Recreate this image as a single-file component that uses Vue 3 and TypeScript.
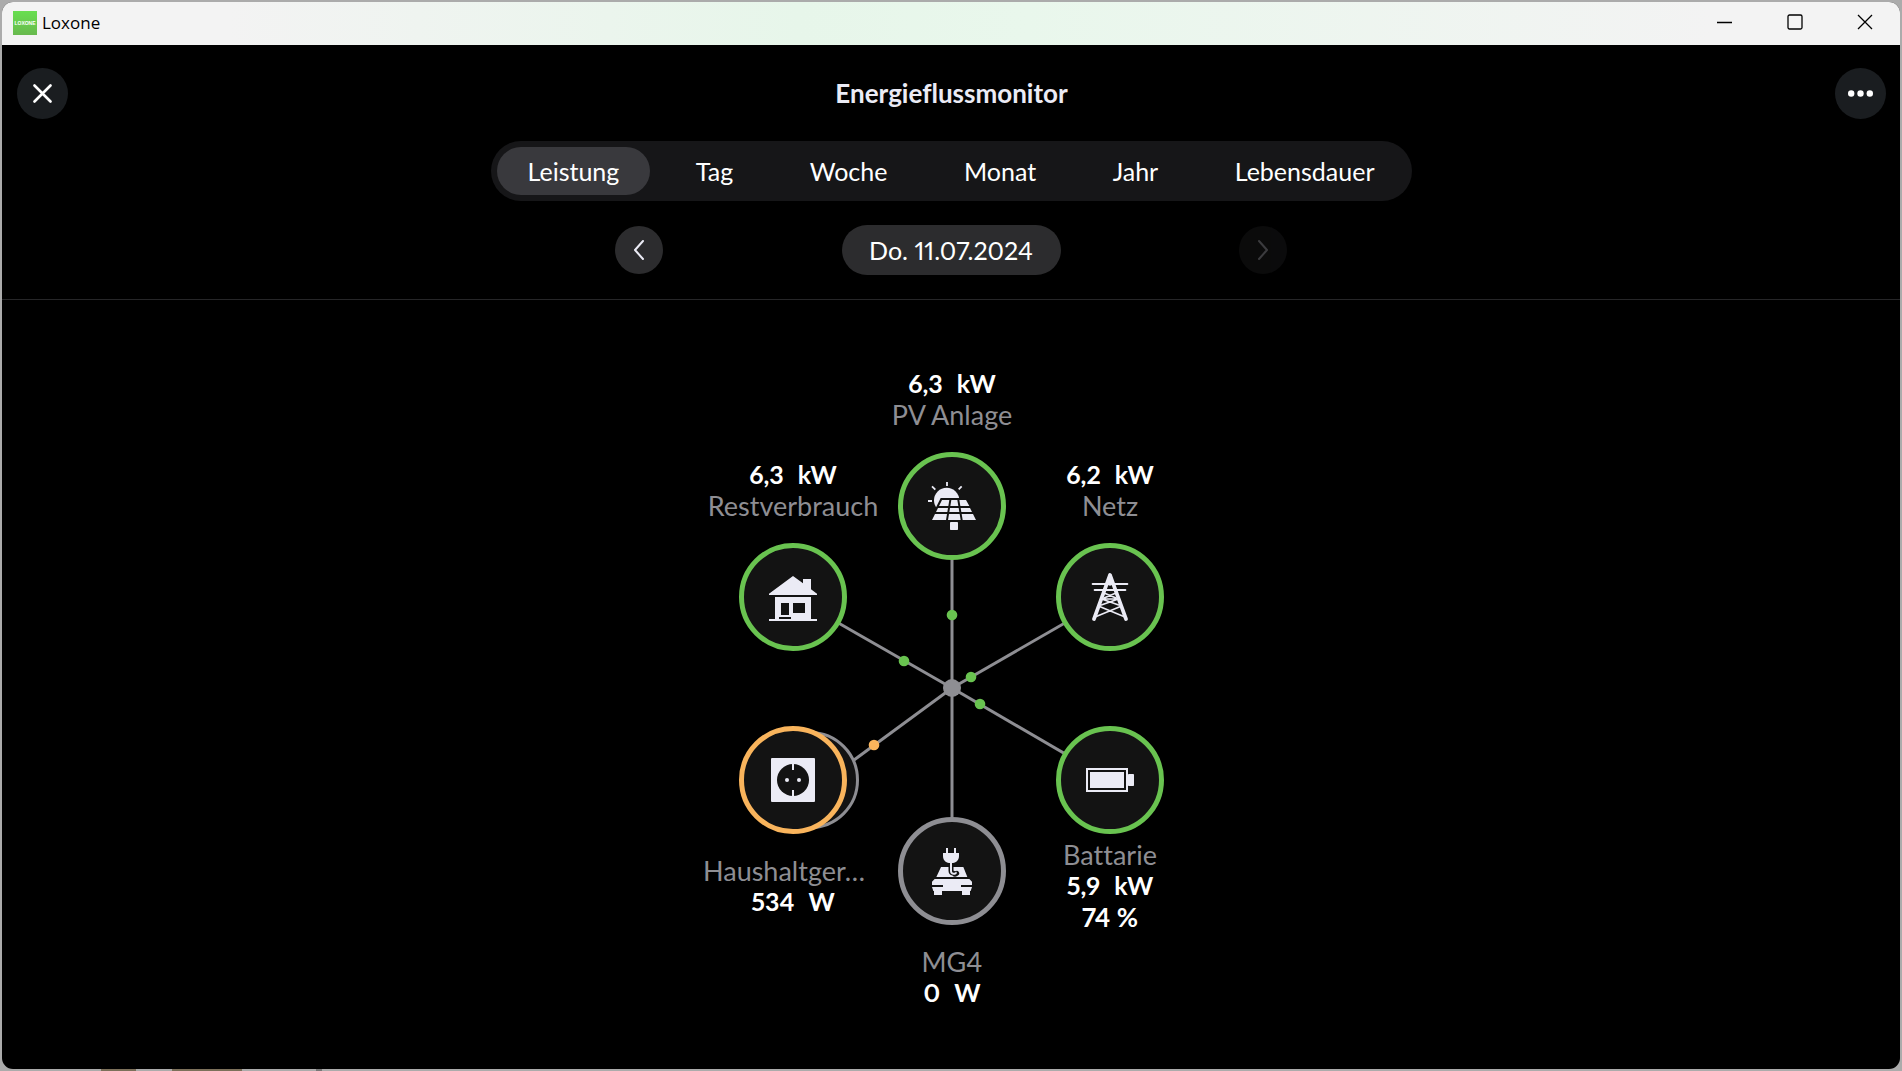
<script setup lang="ts">
import { ref } from 'vue'

type Tone = 'green' | 'orange' | 'gray'
type IconName = 'solar' | 'house' | 'pylon' | 'socket' | 'car' | 'battery'

interface FlowNode {
  id: string
  name: string
  value: string
  unit: string
  extra?: string
  tone: Tone
  icon: IconName
  x: number
  y: number
  caption: 'above' | 'below' | 'near'
  stacked?: boolean
}

const tabs = ['Leistung', 'Tag', 'Woche', 'Monat', 'Jahr', 'Lebensdauer']
const activeTab = ref('Leistung')

const hub = { x: 241, y: 320 }

const nodes: FlowNode[] = [
  { id: 'pv', name: 'PV Anlage', value: '6,3', unit: 'kW', tone: 'green', icon: 'solar', x: 241, y: 138, caption: 'above' },
  { id: 'rest', name: 'Restverbrauch', value: '6,3', unit: 'kW', tone: 'green', icon: 'house', x: 82, y: 229, caption: 'above' },
  { id: 'grid', name: 'Netz', value: '6,2', unit: 'kW', tone: 'green', icon: 'pylon', x: 399, y: 229, caption: 'above' },
  { id: 'home', name: 'Haushaltger…', value: '534', unit: 'W', tone: 'orange', icon: 'socket', x: 82, y: 412, caption: 'below', stacked: true },
  { id: 'car', name: 'MG4', value: '0', unit: 'W', tone: 'gray', icon: 'car', x: 241, y: 503, caption: 'below' },
  { id: 'battery', name: 'Battarie', value: '5,9', unit: 'kW', extra: '74 %', tone: 'green', icon: 'battery', x: 399, y: 412, caption: 'near' },
]

const lines = [
  { x: 241, y: 138 },
  { x: 82, y: 229 },
  { x: 399, y: 229 },
  { x: 143, y: 392 },
  { x: 241, y: 503 },
  { x: 399, y: 412 },
]

const dots: { x: number; y: number; tone: Tone }[] = [
  { x: 241, y: 247, tone: 'green' },
  { x: 193, y: 293, tone: 'green' },
  { x: 260, y: 309, tone: 'green' },
  { x: 269, y: 336, tone: 'green' },
  { x: 163, y: 377, tone: 'orange' },
]
</script>

<template>
  <div class="desktop">
    <div class="window">
      <div class="titlebar">
        <span class="app-logo">LOXONE</span>
        <span class="app-name">Loxone</span>
        <div class="window-controls">
          <button type="button" aria-label="Minimieren">
            <svg width="16" height="16" viewBox="0 0 16 16"><path d="M0 8.500h15" /></svg>
          </button>
          <button type="button" aria-label="Maximieren">
            <svg width="16" height="16" viewBox="0 0 16 16"><rect x="1" y="1" width="14" height="14" rx="1.500" /></svg>
          </button>
          <button type="button" aria-label="Fenster schließen">
            <svg width="16" height="16" viewBox="0 0 16 16"><path d="M1 1l14 14M15 1L1 15" /></svg>
          </button>
        </div>
      </div>

      <header class="header">
        <button type="button" class="round-button" aria-label="Schließen">
          <svg width="19" height="19" viewBox="0 0 19 19">
            <path d="M1.500 1.500l16 16M17.500 1.500l-16 16" stroke="#fff" stroke-width="2.600" stroke-linecap="round" />
          </svg>
        </button>
        <h1>Energieflussmonitor</h1>
        <button type="button" class="round-button" aria-label="Mehr">
          <svg width="25" height="7" viewBox="0 0 25 7" fill="#fff">
            <circle cx="3.200" cy="3.500" r="3.200" /><circle cx="12.500" cy="3.500" r="3.200" /><circle cx="21.800" cy="3.500" r="3.200" />
          </svg>
        </button>
      </header>

      <nav class="tabs">
        <button
          v-for="tab in tabs"
          :key="tab"
          type="button"
          :class="{ active: tab === activeTab }"
          @click="activeTab = tab"
        >{{ tab }}</button>
      </nav>

      <div class="date-nav">
        <button type="button" class="step" aria-label="Vorheriger Tag">
          <svg width="12" height="22" viewBox="0 0 12 22"><path d="M10 2L2 11l8 9" /></svg>
        </button>
        <button type="button" class="date">Do. 11.07.2024</button>
        <button type="button" class="step" aria-label="Nächster Tag" disabled>
          <svg width="12" height="22" viewBox="0 0 12 22"><path d="M2 2l8 9-8 9" /></svg>
        </button>
      </div>

      <main class="content">
        <div class="diagram">
          <svg class="links" width="480" height="640" viewBox="0 0 480 640">
            <g stroke="#8e8e93" stroke-width="3">
              <line v-for="(l, i) in lines" :key="i" :x1="hub.x" :y1="hub.y" :x2="l.x" :y2="l.y" />
            </g>
            <circle :cx="hub.x" :cy="hub.y" r="9" fill="#8e8e93" />
            <circle v-for="(d, i) in dots" :key="i" :cx="d.x" :cy="d.y" r="5.300" :class="['dot', d.tone]" />
          </svg>

          <section
            v-for="n in nodes"
            :key="n.id"
            :class="['node', n.tone, n.caption]"
            :style="{ left: n.x + 'px', top: n.y + 'px' }"
          >
            <span v-if="n.stacked" class="stack"></span>
            <div class="disc">
              <svg width="48" height="48" viewBox="0 0 144 144" fill="#ebebf5">
                <g v-if="n.icon === 'solar'">
                  <path d="M57 0v12M12 13l10 10M101 13l-9 9M0 57h12" stroke="#ebebf5" stroke-width="5.500" />
                  <circle cx="56" cy="55" r="38" />
                  <path d="M38 48h80l34 72H2z" fill="#131313" />
                  <path d="M42 54h22l-3 18H33zM70 54h18l3 18H67zM94 54h20l10 18H97z" />
                  <path d="M30 78h30l-2 12H24zM66 78h26l2 12H64zM98 78h28l6 12h-32z" />
                  <path d="M21 96h36l-3 18H12zM63 96h32l3 18H60zM101 96h34l9 18h-40z" />
                  <rect x="66" y="120" width="24" height="24" rx="2" />
                </g>
                <g v-else-if="n.icon === 'house'">
                  <path d="M72 9l30 22V18h24v31l18 13v4H0v-4z" />
                  <path fill-rule="evenodd" d="M18 72h108v66h18v6H0v-6h18zM36 90v36h24V90zM72 90v30h36V90zM30 132v6h36v-6z" />
                </g>
                <g v-else-if="n.icon === 'pylon'" stroke="#ebebf5" fill="none" stroke-linecap="round" stroke-linejoin="round">
                  <path d="M24 138L72 6l48 132" stroke-width="11" />
                  <path d="M72 10v22" stroke-width="12" />
                  <path d="M20 33h104M26 51h92" stroke-width="6" />
                  <path d="M54 60l36 15M90 60L54 75M47 78l51 18M97 78L46 96M39 100l78 32M105 100l-78 32M50 78h44" stroke-width="5" />
                </g>
                <g v-else-if="n.icon === 'socket'">
                  <rect x="6" y="6" width="132" height="132" rx="3" />
                  <circle cx="72" cy="72" r="48" fill="#131313" />
                  <path d="M69 22h6v20h-6zM69 102h6v20h-6z" />
                  <circle cx="54" cy="72" r="6" /><circle cx="90" cy="72" r="6" />
                </g>
                <g v-else-if="n.icon === 'car'">
                  <path d="M39 60h67l12 30H25z" />
                  <path d="M69 50v21c0 9 9 6 10 9s2 2 7-1" stroke="#131313" stroke-width="15" stroke-linecap="round" fill="none" />
                  <path d="M69 44v28c0 8 6 9 11 8s4-3 6-3" stroke="#ebebf5" stroke-width="6" fill="none" />
                  <path d="M54 3h6v15h18V3h6v15h9v9c0 12-8 20-18 21H63c-10-1-18-9-18-21v-9h9z" />
                  <path d="M20 96h104l8 8v16l-4 12h-2v12h-24v-12H42v12H18v-12h-2l-4-12v-16z" />
                  <path d="M10 117h35M99 117h35" stroke="#131313" stroke-width="6" />
                </g>
                <g v-else>
                  <rect x="3" y="39" width="120" height="66" fill="none" stroke="#ebebf5" stroke-width="6" />
                  <rect x="12" y="48" width="102" height="48" />
                  <rect x="126" y="54" width="18" height="36" rx="2" />
                </g>
              </svg>
            </div>
            <div class="caption">
              <span :class="['name', { cut: n.name.endsWith('…') }]">{{ n.name }}</span>
              <span class="reading"><b>{{ n.value }}</b><b>{{ n.unit }}</b></span>
              <b v-if="n.extra" class="extra">{{ n.extra }}</b>
            </div>
          </section>
        </div>
      </main>
    </div>
  </div>
</template>

<style>
body {
  background: #ababab;
}
</style>

<style scoped>
.desktop {
  box-sizing: border-box;
  min-height: 100vh;
  padding: 2px;
  display: flex;
  background:
    linear-gradient(90deg, transparent 101px, #7c705a 101px 136px, transparent 136px 172px, #7c705a 172px 242px, transparent 242px 316px, #777 316px 322px, transparent 322px) bottom / 100% 2px no-repeat,
    #ababab;
  font-family: Lato, "Liberation Sans", sans-serif;
  font-variant-ligatures: none;
  font-variant-numeric: proportional-nums;
  color: #fff;
}
.desktop * {
  box-sizing: border-box;
}
button {
  margin: 0;
  padding: 0;
  border: 0;
  background: none;
  color: inherit;
  font: inherit;
}
.window {
  flex: 1;
  display: flex;
  flex-direction: column;
  border-radius: 11px;
  overflow: hidden;
  background: #000;
}
.titlebar {
  display: flex;
  align-items: center;
  height: 43px;
  padding: 0 0 1px 11px;
  background: linear-gradient(90deg, #f3f3f3 12%, #e7f6ea 42%, #e9f7ec 54%, #f3f3f3 90%);
  color: #000;
}
.app-logo {
  width: 24px;
  height: 24px;
  margin-right: 5px;
  background: linear-gradient(#68df50, #68b94e);
  color: #fff;
  font: 700 5px/24px "Liberation Sans", sans-serif;
  text-align: center;
}
.app-name {
  font: 17px/24px "Open Sans", sans-serif;
}
.window-controls {
  display: flex;
  height: 100%;
  margin-left: auto;
  padding-bottom: 2px;
}
.window-controls button {
  display: grid;
  place-items: center;
  width: 70px;
}
.window-controls svg {
  fill: none;
  stroke: #000;
  stroke-width: 1.3;
}
.header {
  display: flex;
  align-items: center;
  justify-content: space-between;
  padding: 23px 14px 0 15px;
}
.header h1 {
  margin: 0;
  padding-bottom: 2px;
  font-size: 26px;
  font-weight: 700;
  line-height: 32px;
  color: #ebebf5;
}
.round-button {
  display: grid;
  place-items: center;
  width: 51px;
  height: 51px;
  border-radius: 50%;
  background: #1a1d20;
}
.tabs {
  display: flex;
  align-self: center;
  justify-content: space-between;
  width: 921px;
  max-width: 100%;
  height: 60px;
  margin-top: 22px;
  padding: 6px;
  border-radius: 30px;
  background: #161618;
}
.tabs button {
  padding: 0 31px;
  border-radius: 24px;
  font-size: 25px;
  line-height: 48px;
}
.tabs .active {
  background: #39393d;
}
.date-nav {
  display: flex;
  align-self: center;
  align-items: center;
  justify-content: space-between;
  width: 672px;
  max-width: 100%;
  margin: 24px 0;
}
.step {
  display: grid;
  place-items: center;
  width: 48px;
  height: 48px;
  border-radius: 50%;
  background: #2c2c2e;
}
.step svg {
  fill: none;
  stroke: #ebebf5;
  stroke-width: 2;
  stroke-linecap: round;
  stroke-linejoin: round;
}
.step:disabled {
  opacity: 0.25;
}
.date {
  width: 219px;
  height: 50px;
  border-radius: 25px;
  background: #2c2c2e;
  font-size: 25px;
  font-variant-numeric: proportional-nums;
}
.content {
  flex: 1;
  display: flex;
  justify-content: center;
  padding-top: 68px;
  border-top: 1px solid #262628;
}
.diagram {
  position: relative;
  width: 480px;
  height: 640px;
}
.links {
  display: block;
}
.dot.green {
  fill: #69c350;
}
.dot.orange {
  fill: #f9b45c;
}
.node {
  position: absolute;
  width: 108px;
  height: 108px;
  transform: translate(-50%, -50%);
}
.disc {
  position: relative;
  display: grid;
  place-items: center;
  width: 108px;
  height: 108px;
  border: 5px solid #8e8e93;
  border-radius: 50%;
  background: #131313;
}
.green .disc {
  border-color: #69c350;
}
.orange .disc {
  border-color: #f9b45c;
}
.stack {
  position: absolute;
  top: 5px;
  right: -12px;
  width: 98px;
  height: 98px;
  border: 3px solid #8e8e93;
  border-radius: 50%;
  background: #131313;
}
.caption {
  position: absolute;
  left: 50%;
  display: flex;
  flex-direction: column;
  align-items: center;
  width: 180px;
  transform: translateX(-50%);
  font-size: 25px;
  line-height: 31px;
  white-space: nowrap;
}
.above .caption {
  bottom: 130px;
  flex-direction: column-reverse;
}
.below .caption {
  top: 129px;
}
.near .caption {
  top: 113px;
}
.name {
  font-size: 27px;
  color: #8e8e93;
}
.name.cut {
  width: 100%;
}
.reading {
  display: flex;
  gap: 14px;
}
.extra {
  font-size: 26px;
  line-height: 33px;
}
</style>
